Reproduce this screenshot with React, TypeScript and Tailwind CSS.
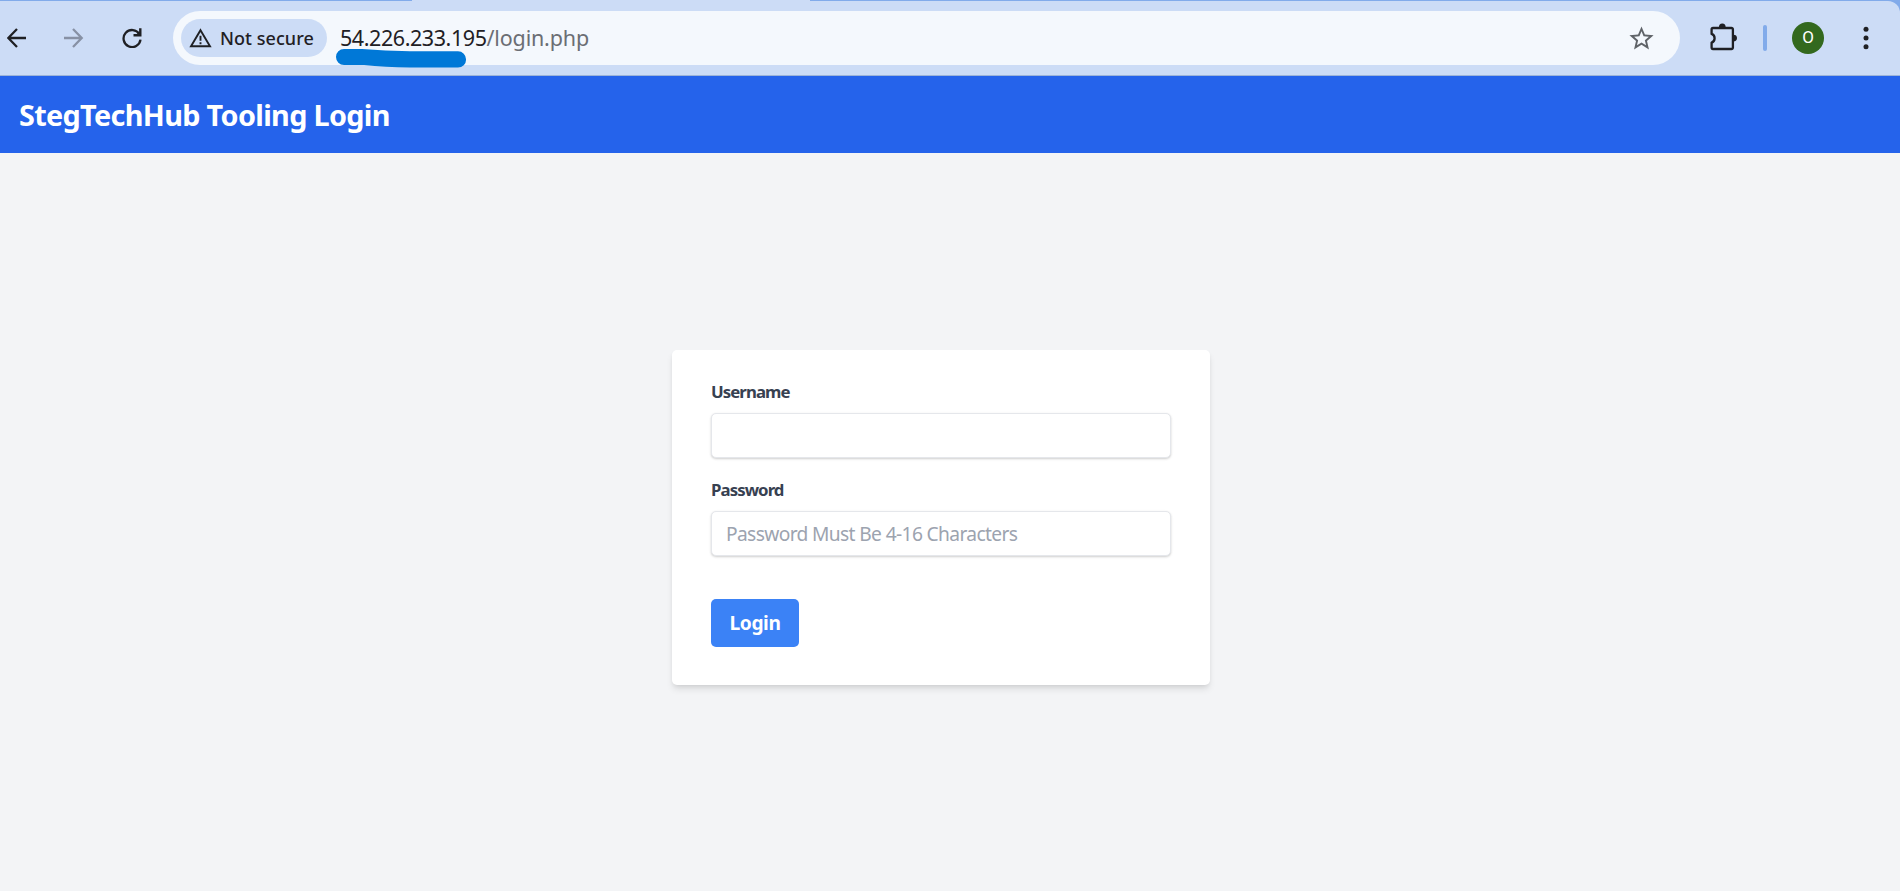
import React from "react";

function BackIcon() {
  return (
    <svg width="20" height="20" viewBox="0 0 20 20" fill="none" stroke="#1f2024" strokeWidth="2.3">
      <path d="M19 10H1.5M10 1 1.3 10l8.700 9" />
    </svg>
  );
}

function ForwardIcon() {
  return (
    <svg width="20" height="20" viewBox="0 0 20 20" fill="none" stroke="#8791a5" strokeWidth="2.3">
      <path d="M0 10H17.500M9 1l8.700 9-8.700 9" />
    </svg>
  );
}

function ReloadIcon() {
  return (
    <svg width="20" height="20" viewBox="0 0 20 20">
      <path d="M17.400 6.200A8.500 8.500 0 1 0 18.500 11.600" fill="none" stroke="#1f2024" strokeWidth="2.300" />
      <path d="M18.300 .300V7.200H11.500" fill="none" stroke="#1f2024" strokeWidth="2.400" />
      <path d="M18 3.500V7H13.500Z" fill="#1f2024" />
    </svg>
  );
}

function WarningIcon() {
  return (
    <svg width="23" height="20" viewBox="0 0 23 20">
      <path d="M11.5 2.2 21 18.2H2Z" fill="none" stroke="#1f2024" strokeWidth="1.9" />
      <path d="M11.5 7.8v5M11.5 14.2v2" stroke="#1f2024" strokeWidth="1.9" />
    </svg>
  );
}

function StarIcon() {
  return (
    <svg width="29" height="29" viewBox="0 0 24 24" fill="#5f6368">
      <path d="m22 9.240-7.190-.620L12 2 9.190 8.630 2 9.240l5.460 4.730L5.820 21 12 17.270 18.180 21l-1.630-7.030L22 9.240zM12 15.400l-3.760 2.270 1-4.280-3.320-2.880 4.380-.380L12 6.100l1.710 4.040 4.380.380-3.320 2.880 1 4.280L12 15.400z" />
    </svg>
  );
}

function ExtensionsIcon() {
  return (
    <svg className="overflow-visible" width="32" height="28" viewBox="0 0 32 28">
      <path
        d="M5 4H23.500a1.400 1.400 0 0 1 1.400 1.400V23.600a1.400 1.400 0 0 1-1.400 1.400H5A1.400 1.400 0 0 1 3.600 23.600V18.600C7.600 17.200 7.600 11.200 3.600 9.900V5.400A1.400 1.400 0 0 1 5 4Z"
        fill="none"
        stroke="#1f2024"
        strokeWidth="2.300"
        strokeLinejoin="round"
      />
      <path d="M10.900 3.600a3.400 4 0 0 1 6.800 0ZM25.300 10.700a3.700 3.400 0 0 1 0 6.800Z" fill="#1f2024" />
    </svg>
  );
}

function MenuIcon() {
  return (
    <svg width="6" height="24" viewBox="0 0 6 24" fill="#1f2024">
      <circle cx="3" cy="3.200" r="2.500" />
      <circle cx="3" cy="12" r="2.500" />
      <circle cx="3" cy="20.800" r="2.500" />
    </svg>
  );
}

function BrowserBar() {
  return (
    <div className="flex h-[76px] flex-col bg-[#82abea]">
      <div className="flex h-px shrink-0">
        <div className="w-[412px]" />
        <div className="w-[398px] bg-[#ccdcf6]" />
      </div>
      <div className="flex h-[75px] items-center rounded-tr-xl border-b border-[#9db4d8] bg-[#ccdcf6] pl-[7px]">
        <BackIcon />
        <div className="ml-[37px] flex">
          <ForwardIcon />
        </div>
        <div className="ml-[38px] flex">
          <ReloadIcon />
        </div>
        <div className="relative ml-[31px] flex h-[54px] w-[1507px] items-center rounded-full bg-[#f4f8fd] pl-2">
          <div className="flex h-[38px] w-[146px] items-center rounded-full bg-[#ccdcf6] pl-2">
            <WarningIcon />
            <span className="ml-2 whitespace-nowrap text-[18px] font-medium tracking-[0.003em] text-[#1f2024]">Not secure</span>
          </div>
          <span className="ml-[13px] whitespace-nowrap text-[21.500px] text-[#6b6e74]">
            <span className="tracking-[-0.020em] text-[#1f2024]">54.226.233.195</span>
            <span className="tracking-[-0.008em]">/login.php</span>
          </span>
          <div className="mr-6 ml-auto flex">
            <StarIcon />
          </div>
          <svg className="absolute top-[37px] left-[162px]" width="132" height="20" viewBox="0 0 132 20">
            <path d="M9 1H27Q50 3 75 3.300H123A7.500 7.500 0 0 1 123 19.500H75Q50 19 29 17H9A8 8 0 0 1 9 1Z" fill="#0078d7" />
          </svg>
        </div>
        <div className="ml-7 flex">
          <ExtensionsIcon />
        </div>
        <div className="ml-[23px] h-[26px] w-1 rounded-full bg-[#82abea]" />
        <div className="ml-[25px] flex size-8 items-center justify-center rounded-full bg-[#33691e] font-['Roboto'] text-[17px] text-white">O</div>
        <div className="ml-[39px] flex">
          <MenuIcon />
        </div>
      </div>
    </div>
  );
}

const inputClass =
  "block h-[45px] w-full rounded-[5px] border border-[#e5e7eb] bg-white px-[14px] text-[19.2px] tracking-[-0.033em] text-gray-700 shadow-[0_1px_3px_0_rgba(0,0,0,0.1),0_1px_2px_0_rgba(0,0,0,0.1)] outline-none placeholder:text-[#9ca3af]";

const labelClass = "block h-[25px] text-[16.800px] leading-[25px] font-bold tracking-[-0.055em] text-[#374151]";

export default function App() {
  return (
    <div className="flex h-[891px] w-[1900px] flex-col overflow-hidden bg-[#f3f4f6] font-['Noto_Sans','Open_Sans',sans-serif]">
      <BrowserBar />
      <header className="flex h-[77px] shrink-0 items-center bg-[#2563eb] pl-[19px]">
        <h1 className="text-[28.800px] font-bold tracking-[-0.023em] whitespace-nowrap text-white">StegTechHub Tooling Login</h1>
      </header>
      <main className="flex flex-1 justify-center pt-[197px] pr-[18px]">
        <form
          className="h-[335px] w-[538px] rounded-[5px] bg-white px-[39px] pt-[29px] shadow-[0_5px_7px_-1px_rgba(0,0,0,0.1),0_2px_5px_-2px_rgba(0,0,0,0.1)]"
          onSubmit={(e) => e.preventDefault()}
        >
          <label className={labelClass} htmlFor="username">Username</label>
          <div className="mt-[9px]">
            <input className={inputClass} id="username" type="text" />
          </div>
          <label className={`mt-[19px] ${labelClass}`} htmlFor="password">Password</label>
          <div className="mt-[9px]">
            <input className={inputClass} id="password" type="password" placeholder="Password Must Be 4-16 Characters" />
          </div>
          <button className="mt-[43px] h-12 w-[88px] rounded-[5px] bg-[#3b82f6] text-[19.2px] font-bold tracking-[-0.022em] text-white" type="submit">
            Login
          </button>
        </form>
      </main>
    </div>
  );
}
